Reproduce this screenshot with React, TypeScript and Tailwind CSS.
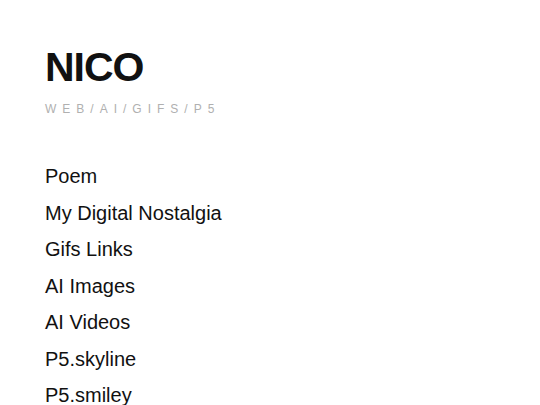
import React from "react";

const items = [
  "Poem",
  "My Digital Nostalgia",
  "Gifs Links",
  "AI Images",
  "AI Videos",
  "P5.skyline",
  "P5.smiley",
];

export default function App() {
  return (
    <div
      className="min-h-screen bg-white pl-[45px] pt-[47px]"
      style={{ fontFamily: '"Liberation Sans", Arial, sans-serif' }}
    >
      <h1 className="text-[41px] font-bold leading-[40px] tracking-[-1px] text-[#111]">
        NICO
      </h1>
      <div className="mt-[15px] text-[12px] leading-[14px] tracking-[0.5em] text-[#b0b0b0]">
        WEB/AI/GIFS/P5
      </div>
      <ul className="mt-[42px] flex flex-col">
        {items.map((t) => (
          <li key={t} className="text-[20px] leading-[36.5px] text-[#111]">
            {t}
          </li>
        ))}
      </ul>
    </div>
  );
}
